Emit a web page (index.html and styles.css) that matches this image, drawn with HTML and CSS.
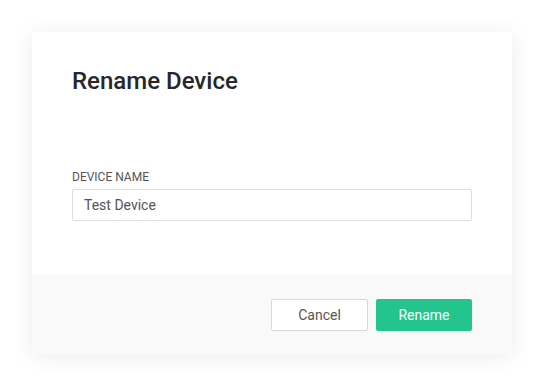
FILE: index.html
```html
<!DOCTYPE html>
<html lang="en">
<head>
    <meta charset="UTF-8">
    <meta name="viewport" content="width=device-width, initial-scale=1.0">
    <title>Rename Device</title>
    <link rel="stylesheet" href="styles.css">
</head>
<body>
    <!-- Rename dialog -->
    <div class="dialog">
        <div class="dialog-body">
            <h2 class="dialog-title">Rename Device</h2>

            <div class="field">
                <label class="field-label" for="deviceName">Device Name</label>
                <input class="field-input" type="text" id="deviceName" value="Test Device">
            </div>
        </div>

        <div class="dialog-footer">
            <button class="btn btn-cancel">Cancel</button>
            <button class="btn btn-primary">Rename</button>
        </div>
    </div>
</body>
</html>
```

FILE: styles.css
```css
body {
    font-family: Roboto, 'Liberation Sans', sans-serif;
    background-color: #FFFFFF;
    color: #26272B;
    margin: 0;
    padding: 32px;
}

.dialog {
    width: 480px;
    background-color: #FFFFFF;
    box-shadow: 0 2px 20px rgba(0, 0, 0, 0.08);
}

.dialog-body {
    padding: 35px 40px 54px;
}

.dialog-title {
    margin: 0;
    font-size: 24px;
    font-weight: 500;
    line-height: 28px;
    color: #26272B;
}

.field {
    margin-top: 74px;
    display: flex;
    flex-direction: column;
}

.field-label {
    font-size: 12px;
    line-height: 16px;
    text-transform: uppercase;
    color: #555;
    margin-bottom: 4px;
}

.field-input {
    height: 32px;
    box-sizing: border-box;
    padding: 0 11px;
    border: 1px solid #DDDDDD;
    border-radius: 2px;
    font-family: inherit;
    font-size: 14px;
    color: #555;
    outline: none;
}

.dialog-footer {
    background-color: #F9F9F9;
    padding: 24px 40px;
    display: flex;
    justify-content: flex-end;
    gap: 8px;
}

.btn {
    height: 32px;
    width: 96px;
    border-radius: 2px;
    font-family: inherit;
    font-size: 14px;
    cursor: pointer;
}

.btn-cancel {
    width: 97px;
    background-color: #FFFFFF;
    border: 1px solid #D8D8D8;
    color: #555;
}

.btn-primary {
    background-color: #23C48E;
    border: none;
    color: #FFFFFF;
}
```
